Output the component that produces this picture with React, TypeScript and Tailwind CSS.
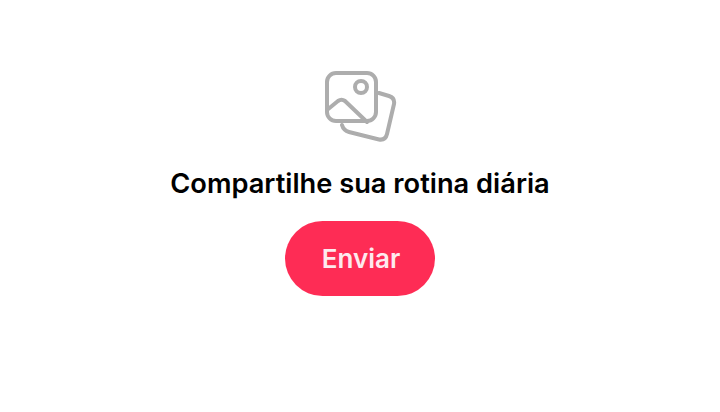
export default function App() {
  return (
    <div className="flex h-[412px] w-[720px] flex-col items-center bg-white pt-[68px] font-['Inter',sans-serif]">
      <svg width="74" height="76" viewBox="0 0 74 76" fill="none" stroke="#adadad" strokeWidth="4" strokeLinejoin="round" strokeLinecap="round">
        <rect x="4" y="5" width="49" height="48" rx="9" />
        <circle cx="38" cy="19" r="6" />
        <path d="M4 42 L15 33 Q18.5 30.5 22 33 L44 54" />
        <path d="M56 25 L66 28 Q72 30 71 36 L64 66 Q62.5 72.5 56 71.5 L26 64 Q20.5 62.5 19 57" />
      </svg>
      <h1 className="mt-[23px] text-[27.25px] leading-[34px] font-semibold text-black">Compartilhe sua rotina diária</h1>
      <button className="mt-[20px] flex h-[75px] w-[150px] items-center justify-center rounded-full bg-[#fe2c55] pl-[2px] text-[26px] font-semibold text-[#fdeaee]">Enviar</button>
    </div>
  );
}
